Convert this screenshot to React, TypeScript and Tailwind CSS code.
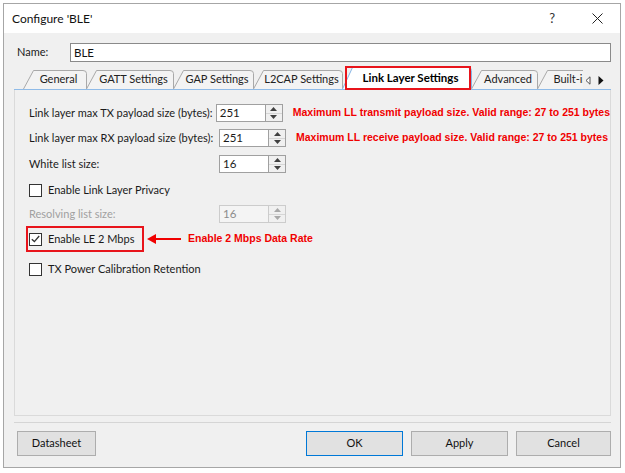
import React from "react";

const ui = { fontFamily: "Lato, 'Liberation Sans', sans-serif" };
const red = { fontFamily: "'Liberation Sans', Arial, sans-serif" };

function Spin({ value, disabled }: { value: string; disabled?: boolean }) {
  return (
    <div className="flex h-[18px]">
      <div
        className={`flex h-full w-[50px] items-center border pl-[3px] text-[11.5px] ${
          disabled ? "border-[#cccccc] bg-[#f4f4f4] text-[#8c8c8c]" : "border-[#a0a0a0] bg-white text-[#1a1a1a]"
        }`}
      >
        {value}
      </div>
      <div
        className={`flex h-full w-[17px] flex-col border-y border-r ${
          disabled ? "border-[#cccccc]" : "border-[#a0a0a0]"
        } bg-[#f0f0f0]`}
      >
        <div className="flex flex-1 items-center justify-center border-b border-[#d6d6d6]">
          <svg width="7" height="4" viewBox="0 0 7 4">
            <path d="M3.5 0 L7 4 L0 4 Z" fill={disabled ? "#a8a8a8" : "#404040"} />
          </svg>
        </div>
        <div className="flex flex-1 items-center justify-center">
          <svg width="7" height="4" viewBox="0 0 7 4">
            <path d="M0 0 L7 0 L3.5 4 Z" fill={disabled ? "#a8a8a8" : "#404040"} />
          </svg>
        </div>
      </div>
    </div>
  );
}

function Check({ checked }: { checked?: boolean }) {
  return (
    <div className="flex h-[13px] w-[13px] shrink-0 items-center justify-center border border-[#333333] bg-white">
      {checked && (
        <svg width="9" height="8" viewBox="0 0 9 8">
          <path d="M0.8 4.2 L3.4 6.6 L8.2 1" stroke="#333" strokeWidth="1.3" fill="none" />
        </svg>
      )}
    </div>
  );
}

function FieldRow({ label, value, note, disabled, top }: { label: string; value: string; note?: string; disabled?: boolean; top: string }) {
  return (
    <div className={`flex h-[18px] items-center ${top}`}>
      <div className={`w-[190px] text-[11px] whitespace-nowrap ${disabled ? "text-[#a0a0a0]" : "text-[#1a1a1a]"}`}>{label}</div>
      <Spin value={value} disabled={disabled} />
      {note && (
        <div className="ml-[10px] text-[10.5px] font-bold whitespace-nowrap text-[#f00000]" style={red}>
          {note}
        </div>
      )}
    </div>
  );
}

const tabs = [
  { name: "General", w: 63 },
  { name: "GATT Settings", w: 87 },
  { name: "GAP Settings", w: 80 },
  { name: "L2CAP Settings", w: 89 },
];

function Tab({ name, w, active }: { name: string; w: number; active?: boolean }) {
  const h = active ? 22 : 19;
  return (
    <div className={`relative flex shrink-0 items-center justify-center pl-[10px] pr-[2px] ${active ? "h-[22px]" : "h-[19px]"}`} style={{ width: w }}>
      <svg className="absolute left-0 top-0" width={w + 1} height={h} viewBox={`0 0 ${w + 1} ${h}`}>
        <path
          d={`M0.5 ${h} L10.5 0.5 L${w - 3} 0.5 Q${w + 0.5} 0.5 ${w + 0.5} 3.5 L${w + 0.5} ${h}`}
          fill={active ? "#ffffff" : "#f3f3f3"}
          stroke={active ? "#86b6e6" : "#a9a9a9"}
        />
      </svg>
      <span className={`relative whitespace-nowrap ${active ? "text-[11.5px] font-bold text-black" : "text-[11px] text-[#222]"}`}>{name}</span>
    </div>
  );
}

export default function App() {
  return (
    <div className="h-[473px] w-[625px] bg-white pl-[3px] pt-[3px]" style={ui}>
      <div className="flex h-[465px] w-[618px] flex-col border border-[#a6a6a6]">
        {/* title bar */}
        <div className="flex h-[29px] items-center bg-white pl-[8px] text-[12px] text-[#111]">
          <span>Configure 'BLE'</span>
          <span className="ml-auto mr-[37px] text-[13px] text-[#333]">?</span>
          <svg className="mr-[17px]" width="11" height="11" viewBox="0 0 11 11">
            <path d="M0.5 0.5 L10.5 10.5 M10.5 0.5 L0.5 10.5" stroke="#222" strokeWidth="1" />
          </svg>
        </div>

        <div className="flex flex-1 flex-col bg-[#f0f0f0]">
          {/* name row */}
          <div className="mt-[10px] flex h-[19px] items-center">
            <span className="ml-[13px] w-[53px] text-[11px] text-[#1a1a1a]">Name:</span>
            <div className="flex h-full w-[541px] items-center border border-[#8a8a8a] bg-white pl-[3px] text-[11.5px] text-[#111]">BLE</div>
          </div>

          {/* tabs */}
          <div className="ml-[10px] mt-[8px] flex h-[20px] w-[597px] items-end border-b border-[#8fbbe8] pl-[9px]">
            {tabs.map((t) => (
              <Tab key={t.name} name={t.name} w={t.w} />
            ))}
            <div className="relative">
              <Tab name="Link Layer Settings" w={129} active />
              <div className="absolute left-[3px] top-[-1px] h-[24px] w-[126px] border-2 border-[#e8141b]" />
            </div>
            <Tab name="Advanced" w={66} />
            <div className="h-[19px] w-[46px] shrink-0 overflow-hidden">
              <div className="w-[62px]">
                <Tab name="Built-in" w={60} />
              </div>
            </div>
            <div className="mb-[4px] ml-[2px] flex items-center gap-[7px]">
              <svg width="6" height="9" viewBox="0 0 6 9">
                <path d="M5 0.8 L1 4.5 L5 8.2 Z" fill="#fff" stroke="#555" strokeWidth="1" />
              </svg>
              <svg width="6" height="9" viewBox="0 0 6 9">
                <path d="M0.5 0 L5.5 4.5 L0.5 9 Z" fill="#111" />
              </svg>
            </div>
          </div>

          {/* panel */}
          <div className="ml-[10px] flex h-[326px] w-[597px] flex-col border-x border-b border-[#dadada] pl-[14px]">
            <FieldRow top="mt-[14px]" label="Link layer max TX payload size (bytes):" value="251" note="Maximum LL transmit payload size. Valid range: 27 to 251 bytes" />
            <FieldRow top="mt-[7px]" label="Link layer max RX payload size (bytes):" value="251" note="Maximum LL receive payload size. Valid range: 27 to 251 bytes" />
            <FieldRow top="mt-[8px]" label="White list size:" value="16" />

            <div className="mt-[11px] flex h-[13px] items-center gap-[6px] text-[11px] text-[#1a1a1a]">
              <Check />
              <span>Enable Link Layer Privacy</span>
            </div>

            <FieldRow top="mt-[8px]" label="Resolving list size:" value="16" disabled />

            <div className="mt-[3px] flex h-[26px] items-center">
              <div className="-ml-[3px] flex h-full w-[118px] items-center gap-[6px] border-2 border-[#e8141b] pl-[1px] text-[11px] whitespace-nowrap text-[#1a1a1a]">
                <Check checked />
                <span>Enable LE 2 Mbps</span>
              </div>
              <svg className="ml-[3px]" width="34" height="12" viewBox="0 0 34 12">
                <path d="M7 6 L34 6" stroke="#f00000" strokeWidth="2" />
                <path d="M0 6 L9 1 L9 11 Z" fill="#f00000" />
              </svg>
              <span className="ml-[7px] text-[10.5px] font-bold text-[#f00000]" style={red}>
                Enable 2 Mbps Data Rate
              </span>
            </div>

            <div className="mt-[11px] flex h-[13px] items-center gap-[6px] text-[11px] text-[#1a1a1a]">
              <Check />
              <span>TX Power Calibration Retention</span>
            </div>
          </div>

          {/* separator */}
          <div className="ml-[10px] mt-[6px] h-[2px] w-[597px] border-t border-[#d5d5d5] border-b-white" />

          {/* buttons */}
          <div className="mt-[7px] flex h-[25px] pl-[13px] pr-[9px] text-[11px] text-[#111]">
            <button className="h-full w-[79px] border border-[#adadad] bg-[#e1e1e1]">Datasheet</button>
            <div className="flex-1" />
            <button className="h-full w-[97px] border border-[#0078d7] bg-[#e1e1e1]">OK</button>
            <button className="ml-[8px] h-full w-[97px] border border-[#adadad] bg-[#e1e1e1]">Apply</button>
            <button className="ml-[8px] h-full w-[95px] border border-[#adadad] bg-[#e1e1e1]">Cancel</button>
          </div>
        </div>
      </div>
    </div>
  );
}
